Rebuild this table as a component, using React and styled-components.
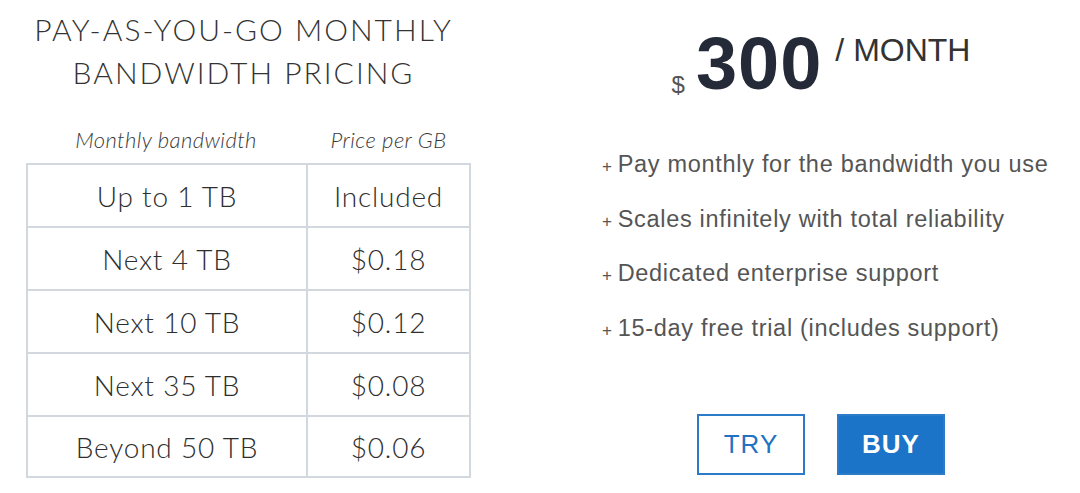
import styled, { createGlobalStyle } from 'styled-components';

const GlobalStyle = createGlobalStyle`
  body {
    margin: 0;
    background: #ffffff;
  }
`;

const Page = styled.div`
  width: 1080px;
  height: 493px;
  display: flex;
  overflow: hidden;
`;

const LeftColumn = styled.div`
  width: 534px;
  padding-left: 26px;
  box-sizing: border-box;
  font-family: Lato, 'Open Sans', sans-serif;
  color: #3a3a3a;
`;

const Title = styled.h1`
  width: 445px;
  margin: 8px 0 0 -5px;
  font-size: 30px;
  font-weight: 300;
  line-height: 43px;
  letter-spacing: 2px;
  text-align: center;
  color: #333;
  white-space: nowrap;
`;

const PriceTable = styled.div`
  width: 445px;
  margin-top: 34px;
  display: grid;
  grid-template-columns: 280px 165px;
`;

const HeadCell = styled.div`
  font-size: 22px;
  font-weight: 300;
  font-style: italic;
  letter-spacing: 0.4px;
  color: #3a3a3a;
  text-align: center;
  height: 35px;
  line-height: 24px;
`;

const Cell = styled.div`
  height: 63px;
  box-sizing: border-box;
  display: flex;
  align-items: center;
  justify-content: center;
  font-size: 28px;
  font-weight: 300;
  letter-spacing: 0.8px;
  color: #2e2e2e;
  border-top: 2px solid #d3d7de;
  border-left: 2px solid #d3d7de;
  border-right: ${(p) => (p.$right ? '2px solid #d3d7de' : 'none')};
  border-bottom: ${(p) => (p.$last ? '2px solid #d3d7de' : 'none')};
`;

const RightColumn = styled.div`
  width: 546px;
  padding-left: 28px;
  box-sizing: border-box;
  display: flex;
  flex-direction: column;
  font-family: 'Liberation Sans', Arial, sans-serif;
`;

const PriceRow = styled.div`
  display: flex;
  justify-content: center;
  align-items: flex-start;
  margin-top: 27px;
`;

const Currency = styled.span`
  font-size: 24px;
  color: #555;
  margin-top: 44px;
  margin-right: 11px;
`;

const Amount = styled.span`
  font-size: 74px;
  font-weight: 700;
  line-height: 74px;
  color: #252a38;
  letter-spacing: 1px;
`;

const Period = styled.span`
  font-size: 32px;
  line-height: 32px;
  color: #333;
  margin-left: 13px;
  margin-top: 7px;
`;

const Features = styled.ul`
  list-style: none;
  margin: 36px 0 0;
  padding-left: 40px;
`;

const Feature = styled.li`
  height: 54.5px;
  font-size: 23.5px;
  line-height: 54px;
  color: #555;
  letter-spacing: 0.7px;
  white-space: nowrap;
`;

const Plus = styled.span`
  font-size: 17px;
  margin-right: 5px;
`;

const Buttons = styled.div`
  display: flex;
  justify-content: center;
  gap: 32px;
  margin-top: 59px;
`;

const Button = styled.button`
  width: 108px;
  height: 61px;
  box-sizing: border-box;
  font-family: 'Liberation Sans', Arial, sans-serif;
  font-size: 26px;
  font-weight: ${(p) => (p.$solid ? 700 : 400)};
  letter-spacing: 1px;
  border: 2px solid #2c7bc8;
  background: ${(p) => (p.$solid ? '#1b74c8' : '#ffffff')};
  color: ${(p) => (p.$solid ? '#ffffff' : '#2272c3')};
  cursor: pointer;
`;

const tiers = [
  ['Up to 1 TB', 'Included'],
  ['Next 4 TB', '$0.18'],
  ['Next 10 TB', '$0.12'],
  ['Next 35 TB', '$0.08'],
  ['Beyond 50 TB', '$0.06'],
];

const features = [
  'Pay monthly for the bandwidth you use',
  'Scales infinitely with total reliability',
  'Dedicated enterprise support',
  '15-day free trial (includes support)',
];

export default function App() {
  return (
    <>
      <GlobalStyle />
      <Page>
        <LeftColumn>
          <Title>
            PAY-AS-YOU-GO MONTHLY
            <br />
            BANDWIDTH PRICING
          </Title>
          <PriceTable>
            <HeadCell>Monthly bandwidth</HeadCell>
            <HeadCell>Price per GB</HeadCell>
            {tiers.map(([amount, price], i) => [
              <Cell key={`a${i}`} $last={i === tiers.length - 1}>
                {amount}
              </Cell>,
              <Cell key={`p${i}`} $right $last={i === tiers.length - 1}>
                {price}
              </Cell>,
            ])}
          </PriceTable>
        </LeftColumn>
        <RightColumn>
          <PriceRow>
            <Currency>$</Currency>
            <Amount>300</Amount>
            <Period>/ MONTH</Period>
          </PriceRow>
          <Features>
            {features.map((f) => (
              <Feature key={f}>
                <Plus>+</Plus>
                {f}
              </Feature>
            ))}
          </Features>
          <Buttons>
            <Button>TRY</Button>
            <Button $solid>BUY</Button>
          </Buttons>
        </RightColumn>
      </Page>
    </>
  );
}
